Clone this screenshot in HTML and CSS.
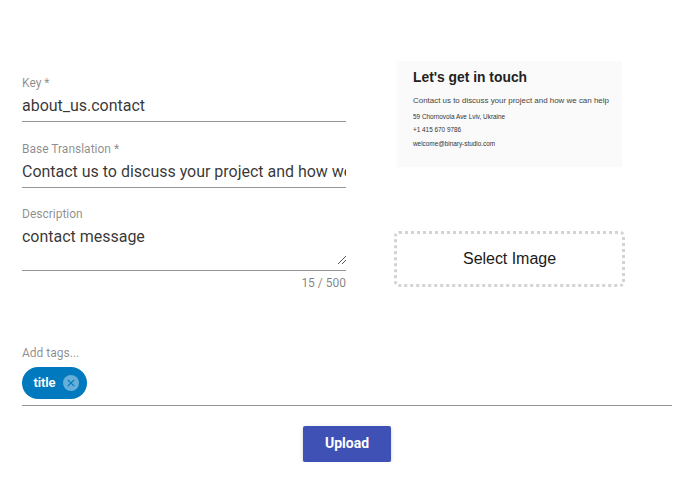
FILE: index.html
```html
<!DOCTYPE html>
<html lang="en">
<head>
<meta charset="utf-8">
<title>Edit key</title>
<link rel="stylesheet" href="styles.css">
</head>
<body>
<form class="form">
  <div class="columns">
    <div class="fields">
      <div class="field">
        <div class="label">Key *</div>
        <div class="value">about_us.contact</div>
      </div>
      <div class="field">
        <div class="label">Base Translation *</div>
        <div class="value">Contact us to discuss your project and how we can help</div>
      </div>
      <div class="field field-area">
        <div class="label">Description</div>
        <div class="value area">contact message</div>
        <svg class="grip" width="9" height="9" viewBox="0 0 9 9"><path d="M0.5 8.5 8.5 0.5M4.5 8.5 8.5 4.5"/></svg>
      </div>
      <div class="hint">15 / 500</div>
    </div>
    <div class="media">
      <div class="preview">
        <div class="preview-title">Let's get in touch</div>
        <div class="preview-lead">Contact us to discuss your project and how we can help</div>
        <div class="preview-line address">59 Chornovola Ave Lviv, Ukraine</div>
        <div class="preview-line phone">+1 415 670 9786</div>
        <div class="preview-line email">welcome@binary-studio.com</div>
      </div>
      <div class="select">Select Image</div>
    </div>
  </div>
  <div class="tags">
    <div class="label">Add tags...</div>
    <div class="chip"><span>title</span>
      <svg width="16" height="16" viewBox="0 0 16 16"><circle cx="8" cy="8" r="8" fill="#66afd9"/><path d="M4.8 4.8 11.2 11.2M11.2 4.8 4.8 11.2" stroke="#0079bf" stroke-width="1.2"/></svg>
    </div>
  </div>
  <div class="upload">Upload</div>
</form>
</body>
</html>
```
FILE: styles.css
```css
* { box-sizing: border-box; }
body { margin: 0; background: #fff; font-family: Roboto, sans-serif; color: rgba(0,0,0,.8); }
.form { width: 650px; margin-left: 22px; padding-top: 61px; display: flex; flex-direction: column; }
.columns { display: flex; height: 283px; }
.fields { width: 324px; padding-top: 13px; }
.field { height: 48px; border-bottom: 1px solid #949494; margin-bottom: 18px; }
.field-area { position: relative; height: 66px; margin: -1px 0 0; }
.label { font-size: 12px; line-height: 18px; color: rgba(0,0,0,.54); opacity: .85; white-space: nowrap; }
.value { font-size: 16px; line-height: 18px; margin-top: 5px; height: 20px; overflow: hidden; white-space: nowrap; letter-spacing: -.015px; }
.grip { position: absolute; right: 0; bottom: 5px; fill: none; stroke: #555; stroke-width: 1; shape-rendering: crispEdges; }
.hint { font-size: 12px; line-height: 14px; margin-top: 5px; text-align: right; color: rgba(0,0,0,.5); }
.media { margin-left: 48px; width: 231px; }
.preview { width: 225px; height: 106px; margin-left: 3px; padding: 7px 0 0 16px; background: #fafafa; font-family: "Liberation Sans", sans-serif; white-space: nowrap; color: #222; }
.preview-title { font-size: 13.85px; line-height: 18px; font-weight: 700; }
.preview-lead { font-size: 7.94px; line-height: 12px; margin-top: 9px; color: #444; }
.preview-line { font-size: 6.4px; line-height: 13.3px; color: #333; }
.address { margin-top: 3px; }
.select { height: 56px; margin-top: 64px; border: 3px dotted #d3d3d3; border-radius: 5px; text-align: center; font-family: "Liberation Sans", sans-serif; font-size: 16px; line-height: 49px; color: #1a1a1a; letter-spacing: -.03px; }
.tags { height: 62px; border-bottom: 1px solid #949494; }
.chip { display: flex; align-items: center; justify-content: space-between; width: 65px; height: 32px; margin-top: 5px; padding: 0 8px 0 11.5px; border-radius: 16px; background: #0079bf; color: #fff; font-size: 13px; font-weight: 600; line-height: 16px; letter-spacing: -.1px; }
.upload { align-self: center; width: 88px; height: 36px; margin: 20px 0 0; border-radius: 2px; background: #3f51b5; color: #fff; text-align: center; font-size: 14px; font-weight: 700; line-height: 35px; box-shadow: 0 3px 1px -2px rgba(0,0,0,.2), 0 2px 2px rgba(0,0,0,.14), 0 1px 5px rgba(0,0,0,.12); }
```
